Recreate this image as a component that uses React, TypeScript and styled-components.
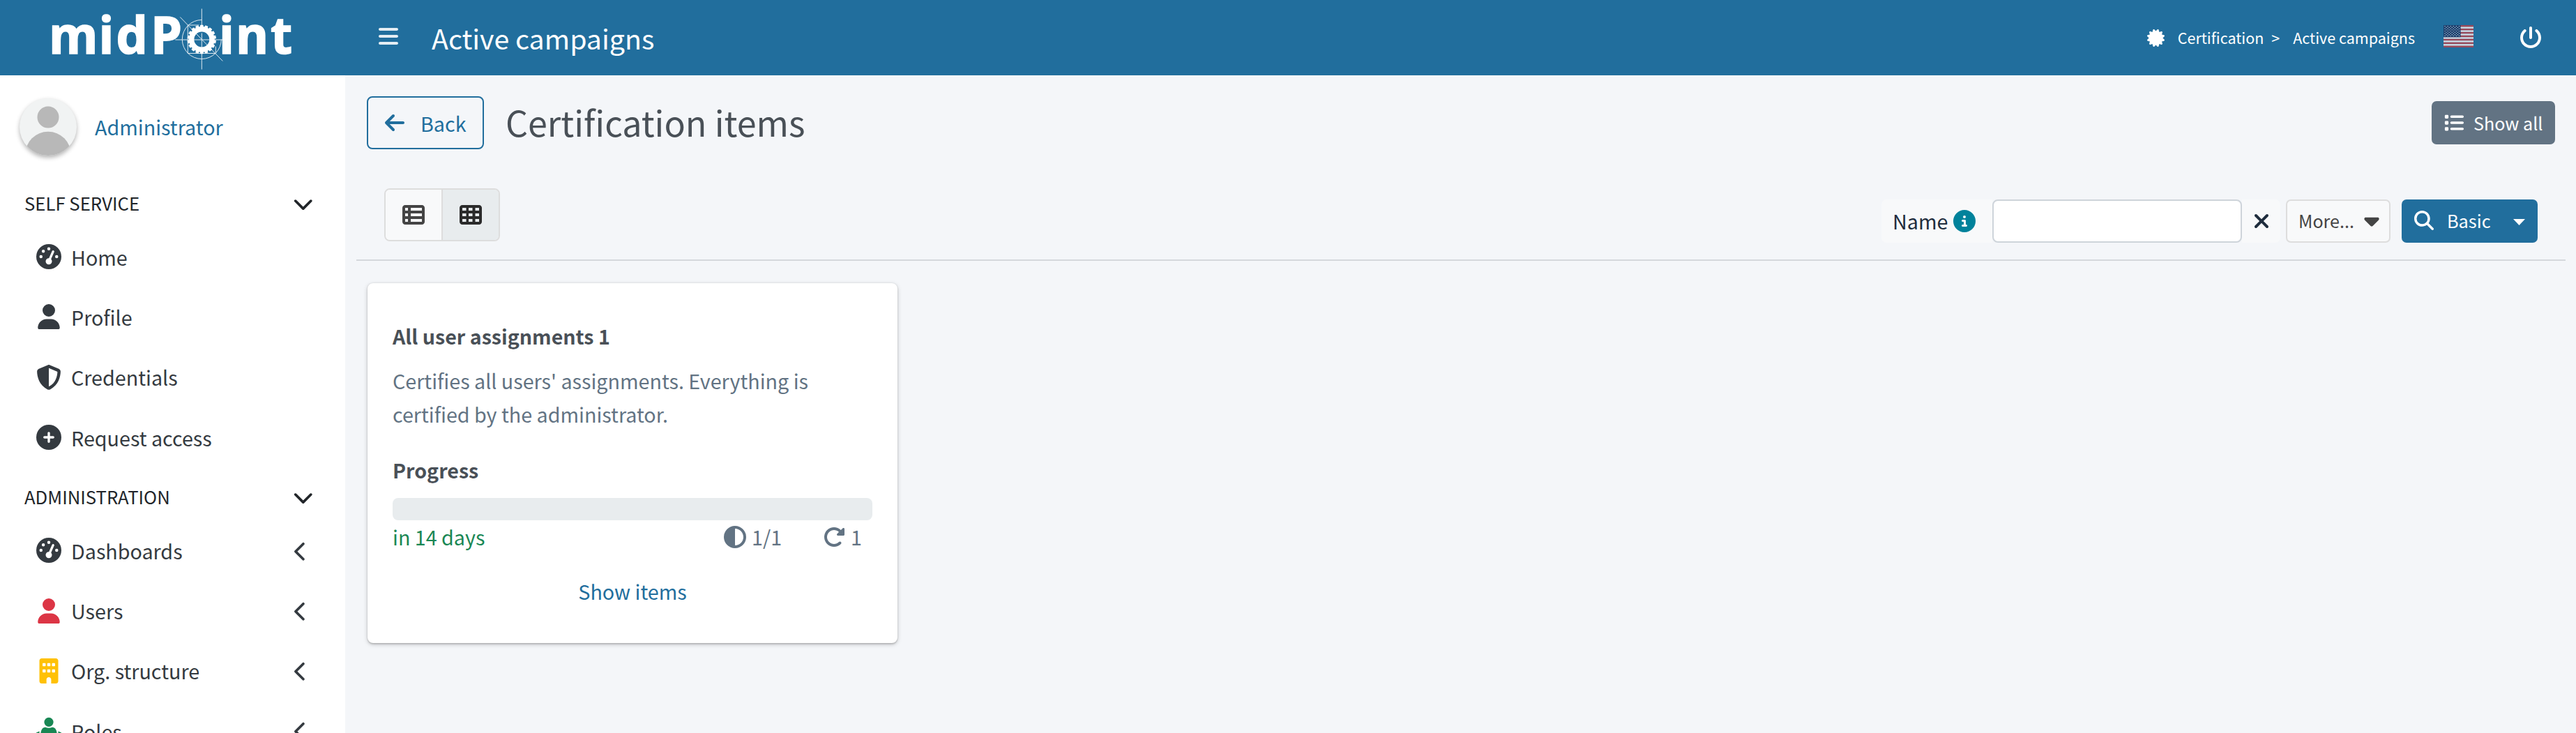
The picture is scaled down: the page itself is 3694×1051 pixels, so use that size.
import React from "react";
import styled, { createGlobalStyle } from "styled-components";
import {
  FaBars, FaArrowLeft, FaGaugeHigh, FaUser, FaShieldHalved, FaCirclePlus, FaBuilding,
  FaChevronDown, FaChevronLeft, FaCertificate, FaPowerOff, FaList, FaTableList, FaTableCells,
  FaCircleInfo, FaXmark, FaCaretDown, FaMagnifyingGlass, FaCircleHalfStroke, FaRotateRight,
} from "react-icons/fa6";

const Global = createGlobalStyle`
  * { box-sizing: border-box; }
  body { margin: 0; overflow: hidden; background: #f4f6f9; }
  body, button, input { font-family: "Noto Sans CJK SC", "Noto Sans", sans-serif; font-size: 28.7px; }
  svg { display: block; flex: none; }
`;

const Page = styled.div`
  display: grid;
  grid-template-columns: 495px 1fr;
  grid-template-rows: 108px 943px;
  height: 1051px;
  overflow: hidden;
  color: #495057;
  line-height: 48px;
`;

const Brand = styled.div`
  background: #216e9d;
  padding-left: 60px;
`;

const Header = styled.header`
  background: #216e9d;
  color: #fff;
  display: flex;
  align-items: center;
  padding: 0 49px 0 48px;
`;

const MenuToggle = styled.span`
  margin-top: -4px;
  svg { width: 28px; height: 32px; }
  opacity: 0.88;
`;

const HeaderTitle = styled.h1`
  margin: 0 0 0 48px;
  font-size: 39.3px;
  font-weight: 400;
  flex: 1;
`;

const Crumbs = styled.nav`
  display: flex;
  align-items: center;
  font-size: 21.5px;
`;

const Crumb = styled.span<{ $gap: number }>`
  margin-left: ${(p) => p.$gap}px;
`;

const FlagBox = styled.div`
  margin: -4px 66px 0 41px;
  opacity: 0.75;
`;

const Sidebar = styled.aside`
  background: #fff;
  overflow: hidden;
`;

const UserPanel = styled.div`
  display: flex;
  align-items: center;
  gap: 26px;
  height: 148px;
  padding-left: 28px;
  color: #216e9d;
`;

const Avatar = styled.div`
  width: 82px;
  height: 82px;
  border-radius: 50%;
  overflow: hidden;
  background: #f1f3f3;
  box-shadow: 0 3px 6px rgba(0, 0, 0, 0.3);
`;

const Section = styled.div<{ $height: number; $drop?: number }>`
  height: ${(p) => p.$height}px;
  display: flex;
  align-items: center;
  justify-content: space-between;
  padding: ${(p) => p.$drop ?? 0}px 46px 0 35px;
  color: #212529;
  font-size: 25.7px;
  svg { margin-top: 3px; }
`;

const MenuItem = styled.div`
  height: 86.3px;
  display: flex;
  align-items: center;
  padding: 0 55px 0 52px;
  color: #343a40;
`;

const MenuIcon = styled.span<{ $color?: string }>`
  width: 36px;
  margin-right: 14px;
  display: flex;
  justify-content: center;
  color: ${(p) => p.$color ?? "#343a40"};
`;

const MenuLabel = styled.span`
  flex: 1;
  padding-top: 1px;
`;

const Expander = styled.span`
  padding-top: 2px;
  svg { width: 18.5px; height: 29.5px; }
`;

const Main = styled.main`
  padding: 30px 15px 0 16px;
`;

const TitleRow = styled.div`
  height: 76px;
  display: flex;
  align-items: center;
  padding: 0 15px;
`;

const BackButton = styled.button`
  width: 168px;
  height: 76px;
  border: 2px solid #216e9d;
  border-radius: 8px;
  background: transparent;
  color: #216e9d;
  display: flex;
  align-items: center;
  padding: 0 0 0 24px;
  gap: 23px;
  svg { width: 28px; height: 32px; }
`;

const PageTitle = styled.h2`
  margin: 0 0 0 31px;
  padding-bottom: 4px;
  flex: 1;
  font-size: 50.2px;
  font-weight: 400;
`;

const ShowAll = styled.button`
  width: 177px;
  height: 62px;
  border: 0;
  border-radius: 7px;
  background: #627383;
  color: #fff;
  display: flex;
  align-items: center;
  gap: 14px;
  padding: 0 0 1px 18px;
  font-size: 25.1px;
`;

const Toolbar = styled.div`
  height: 160px;
  border-bottom: 2px solid #d5d8dc;
  display: flex;
  justify-content: space-between;
  padding: 56px 40px 0 40px;
`;

const ViewToggle = styled.div`
  display: flex;
  width: 166px;
  height: 76px;
  border: 2px solid #ddd;
  border-radius: 8px;
  overflow: hidden;
`;

const ViewOption = styled.div<{ $active?: boolean }>`
  flex: 1;
  display: flex;
  align-items: center;
  justify-content: center;
  background: ${(p) => (p.$active ? "#e8ecee" : "#f8f9fa")};
  color: ${(p) => (p.$active ? "#2b2b2b" : "#444")};
  & + & { border-left: 2px solid #ddd; }
`;

const Search = styled.div`
  display: flex;
  height: 62px;
  margin-top: 16px;
  line-height: 40px;
`;

const SearchLabel = styled.div`
  width: 159px;
  background: #f8f9fa;
  border-radius: 7px 0 0 7px;
  display: flex;
  align-items: center;
  gap: 8px;
  padding-left: 16px;
  color: #1f2d3d;
`;

const SearchInput = styled.input`
  width: 358px;
  border: 2px solid #ced4da;
  border-radius: 8px;
  background: #fff;
`;

const Clear = styled.div`
  width: 55px;
  background: #f8f9fa;
  border-radius: 0 7px 7px 0;
  display: flex;
  align-items: center;
  justify-content: center;
  color: #1f2d3d;
`;

const More = styled.button`
  width: 150px;
  margin-left: 8px;
  border: 2px solid #ddd;
  border-radius: 7px;
  background: #f8f9fa;
  color: #444;
  display: flex;
  align-items: center;
  justify-content: space-between;
  padding: 0 8px 2px 16px;
  font-size: 25.1px;
`;

const Basic = styled.button`
  width: 195px;
  margin-left: 16px;
  border: 0;
  border-radius: 7px;
  background: #216e9d;
  color: #fff;
  display: flex;
  align-items: center;
  padding: 0 18px 2px 18px;
  font-size: 25.3px;
`;

const ButtonText = styled.span<{ $left?: number }>`
  margin-left: ${(p) => p.$left ?? 0}px;
`;

const CaretSlot = styled.span`
  margin-left: auto;
  padding-top: 5px;
`;

const Card = styled.section`
  width: 760px;
  height: 516px;
  margin: 32px 0 0 16px;
  padding: 52px 36px 0;
  background: #fff;
  border-radius: 8px;
  box-shadow: 0 0 2px rgba(0, 0, 0, 0.13), 0 2px 6px rgba(0, 0, 0, 0.2), 0 2px 2px rgba(0, 0, 0, 0.12);
`;

const CardHeading = styled.h3<{ $top?: number }>`
  margin: ${(p) => p.$top ?? 0}px 0 0;
  font-size: 28.6px;
  font-weight: 700;
`;

const Description = styled.p`
  margin: 16px 0 0;
  color: #627383;
`;

const Bar = styled.div`
  height: 32px;
  margin-top: 16px;
  border-radius: 8px;
  background: #e8ecee;
`;

const Stats = styled.div`
  display: flex;
  align-items: center;
  height: 48px;
  color: #627383;
`;

const Deadline = styled.span`
  flex: 1;
  color: #198754;
`;

const Stat = styled.span<{ $width: number }>`
  width: ${(p) => p.$width}px;
  display: flex;
  align-items: center;
  gap: 8px;
`;

const ShowItems = styled.div`
  margin-top: 30px;
  text-align: center;
  color: #216e9d;
`;

const Wordmark = styled.g`
  font-family: "Open Sans", sans-serif;
  font-weight: 700;
  font-size: 74px;
  stroke: #fff;
  stroke-width: 1.6px;
`;

function Logo() {
  const teeth = Array.from({ length: 18 }, (_, i) => i * 20);
  const squeeze = 0.97;
  const letters: [string, number][] = [
    ["m", 10], ["i", 81.5], ["d", 106.5], ["P", 156], ["i", 254], ["n", 278], ["t", 328],
  ];
  return (
    <svg width="370" height="108" viewBox="0 0 370 108" fill="#fff">
      <Wordmark transform={`scale(${squeeze} 1)`}>
        <text y="76.500" x={letters.slice(0, 4).map((l) => l[1] / squeeze).join(" ")}>midP</text>
        <text y="76.500" x={letters.slice(4).map((l) => l[1] / squeeze).join(" ")}>int</text>
      </Wordmark>
      <g transform="translate(229.300 56.500)">
        <circle r="14.700" fill="none" stroke="#fff" strokeWidth="7.500" />
        {teeth.map((a) => (
          <rect key={a} x="-2.300" y="-20.700" width="4.600" height="4" rx="0.800" transform={`rotate(${a})`} />
        ))}
        <g fill="none" stroke="#fff" strokeWidth="1" opacity="0.85">
          <path d="M0-44V-20M0-9V43M-38 .5H30M-31-32L30 31M-20-20.500H-4M-20-20.500V20H20V10" />
          <path d="M0-28A28 28 0 1 0 28 0" />
        </g>
      </g>
    </svg>
  );
}

function Flag() {
  const h = 32 / 13;
  return (
    <svg width="43" height="32" viewBox="0 0 43 32">
      <rect width="43" height="32" fill="#fff" />
      {[0, 2, 4, 6, 8, 10, 12].map((i) => (
        <rect key={i} y={i * h} width="43" height={h} fill="#bd3d44" />
      ))}
      <rect width="24.5" height={h * 7} fill="#192f5d" />
      {Array.from({ length: 9 }, (_, r) =>
        Array.from({ length: r % 2 ? 5 : 6 }, (_, c) => (
          <circle key={`${r}-${c}`} cx={2 + c * 4.1 + (r % 2 ? 2.05 : 0)} cy={1.7 + r * 1.72} r="0.65" fill="#fff" />
        ))
      )}
    </svg>
  );
}

function RoleIcon() {
  return (
    <svg width="36" height="36" viewBox="0 0 36 36" fill="currentColor" overflow="visible">
      <circle cx="18" cy="5.300" r="6.600" />
      <path d="M6.500 36V20Q8 12.700 13 12.700Q18 14.800 23 12.700Q28 12.700 29.500 20V36zM0 20.500L4.500 18.500V36H0zM36 20.500L31.500 18.500V36H36z" />
    </svg>
  );
}

const selfService = [
  { label: "Home", icon: <FaGaugeHigh size={36} /> },
  { label: "Profile", icon: <FaUser size={36} /> },
  { label: "Credentials", icon: <FaShieldHalved size={36} /> },
  { label: "Request access", icon: <FaCirclePlus size={36} /> },
];

const administration = [
  { label: "Dashboards", icon: <FaGaugeHigh size={36} /> },
  { label: "Users", icon: <FaUser size={36} />, color: "#dc3545" },
  { label: "Org. structure", icon: <FaBuilding size={36} />, color: "#ffc107" },
  { label: "Roles", icon: <RoleIcon />, color: "#198754" },
];

export default function App() {
  return (
    <>
      <Global />
      <Page>
        <Brand><Logo /></Brand>
        <Header>
          <MenuToggle><FaBars /></MenuToggle>
          <HeaderTitle>Active campaigns</HeaderTitle>
          <Crumbs>
            <FaCertificate size={25} />
            <Crumb $gap={19}>Certification</Crumb>
            <Crumb $gap={11}>&gt;</Crumb>
            <Crumb $gap={19}>Active campaigns</Crumb>
          </Crumbs>
          <FlagBox><Flag /></FlagBox>
          <FaPowerOff size={32} />
        </Header>
        <Sidebar>
          <UserPanel>
            <Avatar>
              <svg width="82" height="82" viewBox="0 0 82 82" fill="#b8b8b8">
                <circle cx="41" cy="27" r="15.500" />
                <circle cx="41" cy="80.500" r="32.800" />
              </svg>
            </Avatar>
            Administrator
          </UserPanel>
          <Section $height={69}>SELF SERVICE<FaChevronDown size={29.5} /></Section>
          {selfService.map((m) => (
            <MenuItem key={m.label}>
              <MenuIcon>{m.icon}</MenuIcon>
              <MenuLabel>{m.label}</MenuLabel>
            </MenuItem>
          ))}
          <Section $height={76} $drop={7}>ADMINISTRATION<FaChevronDown size={29.5} /></Section>
          {administration.map((m) => (
            <MenuItem key={m.label}>
              <MenuIcon $color={m.color}>{m.icon}</MenuIcon>
              <MenuLabel>{m.label}</MenuLabel>
              <Expander><FaChevronLeft /></Expander>
            </MenuItem>
          ))}
        </Sidebar>
        <Main>
          <TitleRow>
            <BackButton><FaArrowLeft />Back</BackButton>
            <PageTitle>Certification items</PageTitle>
            <ShowAll><FaList size={28} />Show all</ShowAll>
          </TitleRow>
          <Toolbar>
            <ViewToggle>
              <ViewOption><FaTableList size={32} /></ViewOption>
              <ViewOption $active><FaTableCells size={32} /></ViewOption>
            </ViewToggle>
            <Search>
              <SearchLabel>
                <ButtonText>Name</ButtonText>
                <FaCircleInfo size={32} color="#00829b" />
              </SearchLabel>
              <SearchInput />
              <Clear><FaXmark size={32} /></Clear>
              <More><ButtonText>More...</ButtonText><FaCaretDown size={34} /></More>
              <Basic>
                <FaMagnifyingGlass size={28} />
                <ButtonText $left={19}>Basic</ButtonText>
                <CaretSlot>
                  <svg width="17" height="9" viewBox="0 0 17 9"><path d="M0 0h17L8.500 9z" fill="#fff" /></svg>
                </CaretSlot>
              </Basic>
            </Search>
          </Toolbar>
          <Card>
            <CardHeading>All user assignments 1</CardHeading>
            <Description>
              Certifies all users' assignments. Everything is certified by the administrator.
            </Description>
            <CardHeading $top={32}>Progress</CardHeading>
            <Bar />
            <Stats>
              <Deadline>in 14 days</Deadline>
              <Stat $width={142}><FaCircleHalfStroke size={32} />1/1</Stat>
              <Stat $width={71}><FaRotateRight size={32} />1</Stat>
            </Stats>
            <ShowItems>Show items</ShowItems>
          </Card>
        </Main>
      </Page>
    </>
  );
}
